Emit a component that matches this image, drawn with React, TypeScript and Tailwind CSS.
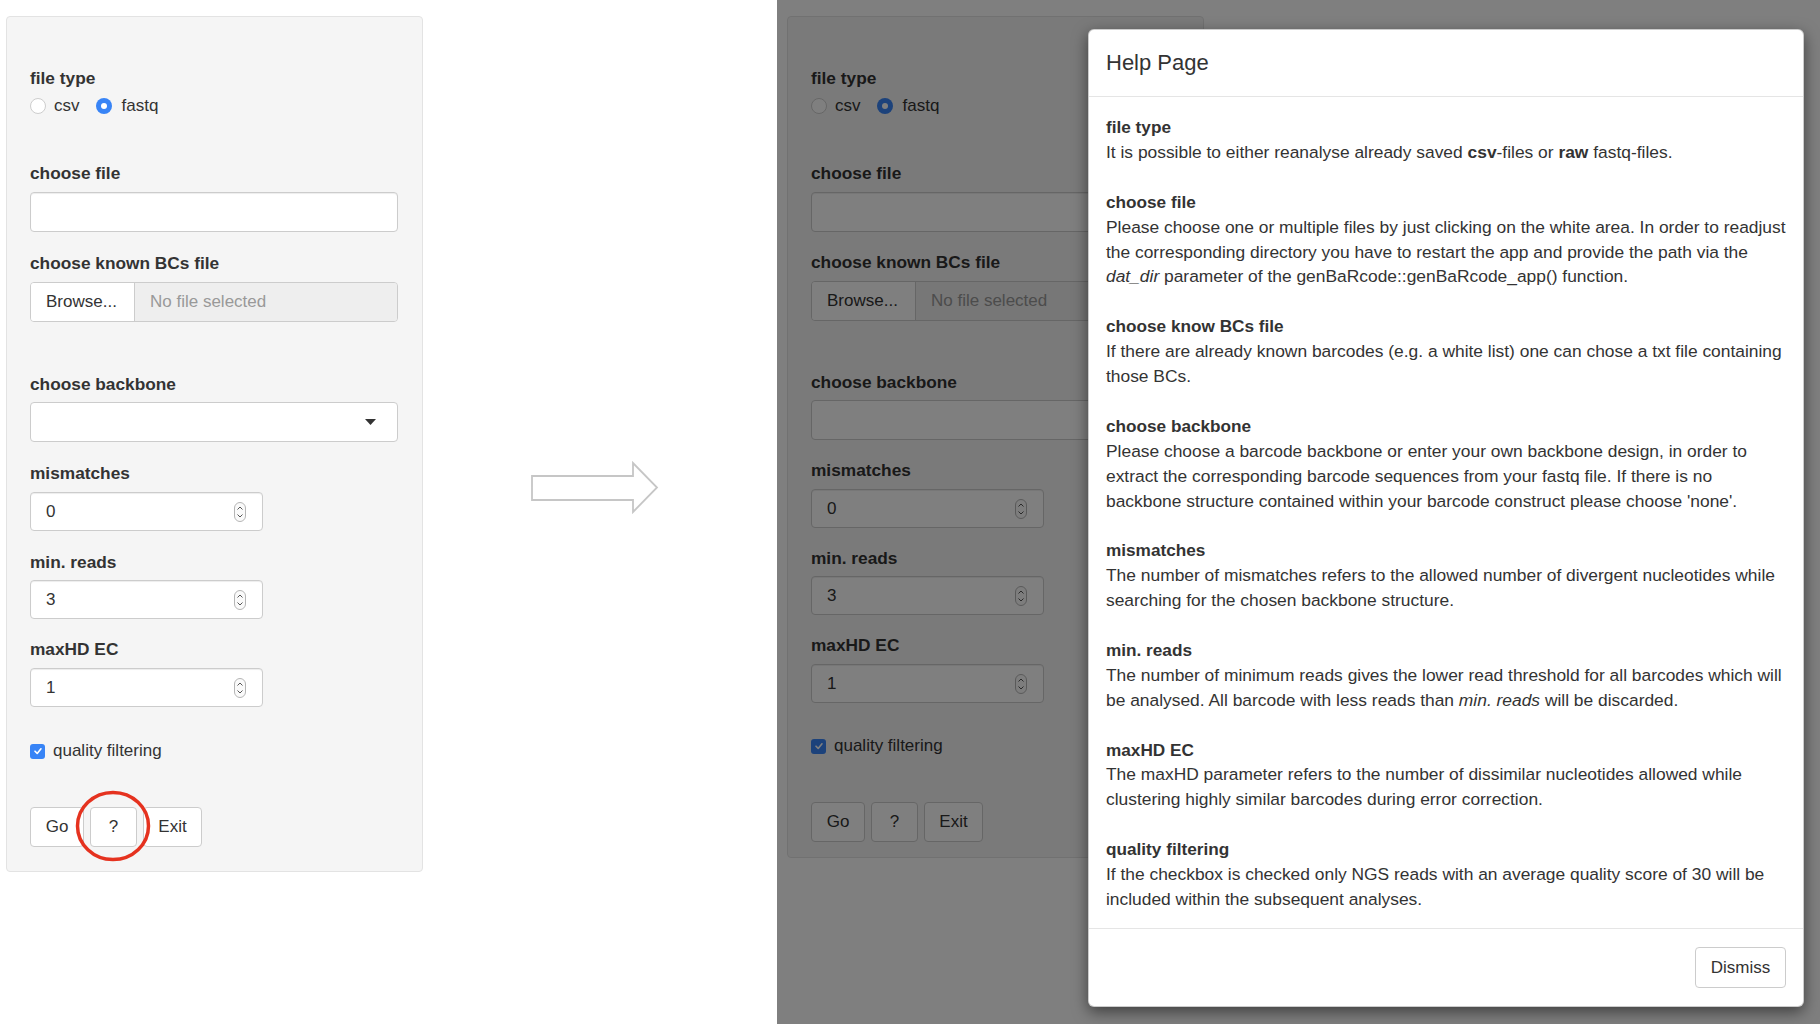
import React from "react";

const font = "font-['Liberation_Sans',Arial,Helvetica,sans-serif]";

const help: { title: string; lines: React.ReactNode[] }[] = [
  {
    title: "file type",
    lines: [
      <>
        It is possible to either reanalyse already saved <b>csv</b>-files or <b>raw</b> fastq-files.
      </>,
    ],
  },
  {
    title: "choose file",
    lines: [
      "Please choose one or multiple files by just clicking on the white area. In order to readjust",
      "the corresponding directory you have to restart the app and provide the path via the",
      <>
        <i>dat_dir</i> parameter of the genBaRcode::genBaRcode_app() function.
      </>,
    ],
  },
  {
    title: "choose know BCs file",
    lines: [
      "If there are already known barcodes (e.g. a white list) one can chose a txt file containing",
      "those BCs.",
    ],
  },
  {
    title: "choose backbone",
    lines: [
      "Please choose a barcode backbone or enter your own backbone design, in order to",
      "extract the corresponding barcode sequences from your fastq file. If there is no",
      "backbone structure contained within your barcode construct please choose 'none'.",
    ],
  },
  {
    title: "mismatches",
    lines: [
      "The number of mismatches refers to the allowed number of divergent nucleotides while",
      "searching for the chosen backbone structure.",
    ],
  },
  {
    title: "min. reads",
    lines: [
      "The number of minimum reads gives the lower read threshold for all barcodes which will",
      <>
        be analysed. All barcode with less reads than <i>min. reads</i> will be discarded.
      </>,
    ],
  },
  {
    title: "maxHD EC",
    lines: [
      "The maxHD parameter refers to the number of dissimilar nucleotides allowed while",
      "clustering highly similar barcodes during error correction.",
    ],
  },
  {
    title: "quality filtering",
    lines: [
      "If the checkbox is checked only NGS reads with an average quality score of 30 will be",
      "included within the subsequent analyses.",
    ],
  },
];

function Label({ children, mb }: { children: React.ReactNode; mb: string }) {
  return <div className={`h-[20px] text-[17.3px] font-bold leading-[20px] ${mb}`}>{children}</div>;
}

function Spinner() {
  return (
    <svg width="12" height="20" viewBox="0 0 12 20" fill="none">
      <rect x="0.5" y="0.5" width="11" height="19" rx="5.5" stroke="#b5b5b5" fill="#fafafa" />
      <path d="M3.5 7.5 L6 5 L8.5 7.5" stroke="#555" strokeWidth="1" />
      <path d="M3.5 12.5 L6 15 L8.5 12.5" stroke="#555" strokeWidth="1" />
    </svg>
  );
}

function NumberInput({ value }: { value: string }) {
  return (
    <div className="flex h-[39px] w-[233px] items-center justify-between rounded-[4px] border border-[#cccccc] bg-white pl-[15px] pr-[16px] text-[17px] shadow-[inset_0_1px_1px_rgba(0,0,0,0.075)]">
      <span>{value}</span>
      <Spinner />
    </div>
  );
}

function Radio({ checked }: { checked?: boolean }) {
  return checked ? (
    <span className="flex size-[16px] items-center justify-center rounded-full bg-[#3884f6]">
      <span className="size-[6px] rounded-full bg-white" />
    </span>
  ) : (
    <span className="size-[16px] rounded-full border border-[#cdcdcd] bg-white" />
  );
}

// the dimmed copy on the right sits a few pixels tighter than the left one
function Form({ tight, circled }: { tight?: boolean; circled?: boolean }) {
  return (
    <div
      className={`w-[417px] rounded-[4px] border border-[#e3e3e3] bg-[#f5f5f5] pl-[23px] pr-[24px] pt-[51px] ${
        tight ? "pb-[15px]" : "pb-[24px]"
      }`}
    >
      <Label mb="mb-[8px]">file type</Label>
      <div className="flex h-[20px] items-center text-[17px]">
        <Radio />
        <span className="ml-[8px]">csv</span>
        <span className="ml-[16px] flex">
          <Radio checked />
        </span>
        <span className="ml-[10px]">fastq</span>
      </div>

      <div className="mt-[47px]">
        <Label mb="mb-[9px]">choose file</Label>
        <div className="h-[40px] rounded-[4px] border border-[#cccccc] bg-white shadow-[inset_0_1px_1px_rgba(0,0,0,0.075)]" />
      </div>

      <div className={tight ? "mt-[20px]" : "mt-[21px]"}>
        <Label mb="mb-[9px]">choose known BCs file</Label>
        <div className="flex h-[40px] overflow-hidden rounded-[4px] border border-[#cccccc] text-[17px]">
          <div className="flex w-[104px] items-center border-r border-[#cccccc] bg-white pl-[15px]">Browse...</div>
          <div className="flex flex-1 items-center bg-[#eeeeee] pl-[15px] text-[#999999]">No file selected</div>
        </div>
      </div>

      <div className={tight ? "mt-[51px]" : "mt-[52px]"}>
        <Label mb="mb-[8px]">choose backbone</Label>
        <div className="flex h-[40px] items-center justify-end rounded-[4px] border border-[#cccccc] bg-white pr-[21px]">
          <svg width="11" height="6" viewBox="0 0 11 6">
            <path d="M0 0 H11 L5.5 6 Z" fill="#333333" />
          </svg>
        </div>
      </div>

      <div className={tight ? "mt-[20px]" : "mt-[21px]"}>
        <Label mb="mb-[9px]">mismatches</Label>
        <NumberInput value="0" />
      </div>
      <div className={tight ? "mt-[20px]" : "mt-[21px]"}>
        <Label mb="mb-[8px]">min. reads</Label>
        <NumberInput value="3" />
      </div>
      <div className="mt-[20px]">
        <Label mb="mb-[9px]">maxHD EC</Label>
        <NumberInput value="1" />
      </div>

      <div className={`flex h-[20px] items-center text-[17px] ${tight ? "mt-[33px]" : "mt-[34px]"}`}>
        <span className="flex size-[15px] items-center justify-center rounded-[3px] bg-[#3884f6]">
          <svg width="10" height="10" viewBox="0 0 10 10" fill="none">
            <path d="M2 5.2 L4.2 7.4 L8 2.8" stroke="white" strokeWidth="1.6" strokeLinecap="round" strokeLinejoin="round" />
          </svg>
        </span>
        <span className="ml-[8px]">quality filtering</span>
      </div>

      <div className="relative mt-[46px] flex gap-[6px] text-[17px]">
        <div className="flex h-[40px] w-[54px] items-center justify-center rounded-[4px] border border-[#cccccc] bg-white">Go</div>
        <div className="flex h-[40px] w-[47px] items-center justify-center rounded-[4px] border border-[#cccccc] bg-white">?</div>
        <div className="flex h-[40px] w-[59px] items-center justify-center rounded-[4px] border border-[#cccccc] bg-white">Exit</div>
        {circled && (
          <svg className="absolute left-[45px] top-[-17px]" width="76" height="72" viewBox="0 0 76 72" fill="none">
            <ellipse cx="38" cy="36" rx="35.5" ry="33.5" stroke="#e5321f" strokeWidth="3.5" />
          </svg>
        )}
      </div>
    </div>
  );
}

function HelpModal() {
  return (
    <div className="absolute left-[311px] top-[29px] w-[716px] rounded-[6px] border border-black/20 bg-white shadow-[0_5px_15px_rgba(0,0,0,0.5)]">
      <div className="flex h-[67px] items-center border-b border-[#e5e5e5] px-[17px]">
        <h4 className="text-[22px] leading-[26px] text-[#333333]">Help Page</h4>
      </div>
      <div className="px-[17px] pb-[16px] pt-[18px] text-[17.4px] leading-[24.9px]">
        {help.map((s, i) => (
          <div key={s.title} className={i < help.length - 1 ? "mb-[24.9px]" : ""}>
            <div className="text-[17.2px] font-bold">{s.title}</div>
            {s.lines.map((l, j) => (
              <div key={j} className="whitespace-nowrap">
                {l}
              </div>
            ))}
          </div>
        ))}
      </div>
      <div className="flex justify-end border-t border-[#e5e5e5] px-[17px] py-[18px]">
        <div className="flex h-[41px] w-[91px] items-center justify-center rounded-[4px] border border-[#cccccc] bg-white text-[17px]">
          Dismiss
        </div>
      </div>
    </div>
  );
}

export default function App() {
  return (
    <div className={`flex h-[1024px] w-[1820px] overflow-hidden bg-white text-[#333333] ${font}`}>
      <div className="flex w-[777px] items-start pl-[6px] pt-[16px]">
        <Form circled />
        <svg className="ml-[105px] mt-[442px]" width="134" height="58" viewBox="0 0 134 58" fill="none">
          <path d="M4 18 H105 V5 L129 29.5 L105 54 V42 H4 Z" stroke="#c6c6c6" strokeWidth="1.8" fill="white" />
        </svg>
      </div>

      <div className="relative flex-1 pl-[10px] pt-[16px]">
        <Form tight />
        <div className="absolute inset-0 bg-black/50" />
        <HelpModal />
      </div>
    </div>
  );
}
